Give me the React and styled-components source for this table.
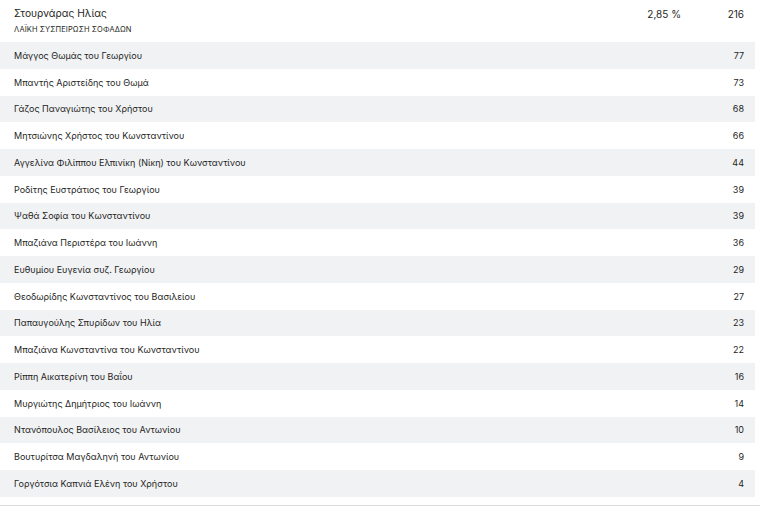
import React from 'react';
import styled, { createGlobalStyle } from 'styled-components';

const GlobalStyle = createGlobalStyle`
  body {
    margin: 0;
    background: #fff;
    font-family: Inter, "Noto Sans", sans-serif;
    color: #1f1f24;
  }
`;

const candidates = [
  ['Μάγγος Θωμάς του Γεωργίου', 77],
  ['Μπαντής Αριστείδης του Θωμά', 73],
  ['Γάζος Παναγιώτης του Χρήστου', 68],
  ['Μητσιώνης Χρήστος του Κωνσταντίνου', 66],
  ['Αγγελίνα Φιλίππου Ελπινίκη (Νίκη) του Κωνσταντίνου', 44],
  ['Ροδίτης Ευστράτιος του Γεωργίου', 39],
  ['Ψαθά Σοφία του Κωνσταντίνου', 39],
  ['Μπαζιάνα Περιστέρα του Ιωάννη', 36],
  ['Ευθυμίου Ευγενία συζ. Γεωργίου', 29],
  ['Θεοδωρίδης Κωνσταντίνος του Βασιλείου', 27],
  ['Παπαυγούλης Σπυρίδων του Ηλία', 23],
  ['Μπαζιάνα Κωνσταντίνα του Κωνσταντίνου', 22],
  ['Ρίππη Αικατερίνη του Βαΐου', 16],
  ['Μυργιώτης Δημήτριος του Ιωάννη', 14],
  ['Ντανόπουλος Βασίλειος του Αντωνίου', 10],
  ['Βουτυρίτσα Μαγδαληνή του Αντωνίου', 9],
  ['Γοργότσια Καπνιά Ελένη του Χρήστου', 4],
];

const Wrapper = styled.div`
  width: 760px;
  border-bottom: 1px solid #dcdde1;
  padding-bottom: 8px;
`;

const Table = styled.div`
  width: 755px;
  display: flex;
  flex-direction: column;
`;

const Header = styled.div`
  height: 42px;
  display: grid;
  grid-template-columns: 1fr 80px 63px;
  align-items: start;
  padding: 6px 11px 0 14px;
  box-sizing: border-box;
`;

const Party = styled.div`
  display: flex;
  flex-direction: column;
  gap: 4px;
`;

const Name = styled.span`
  font-size: 10.2px;
  line-height: 15px;
`;

const Subtitle = styled.span`
  font-size: 7.5px;
  letter-spacing: 0.1px;
  line-height: 10px;
`;

const HeadValue = styled.span`
  font-size: 10px;
  line-height: 15px;
  text-align: right;
  padding-top: 1px;
`;

const Row = styled.div`
  height: 26.75px;
  display: flex;
  align-items: center;
  justify-content: space-between;
  padding: 0 11px 0 14px;
  box-sizing: border-box;
  background: ${({ $shaded }) => ($shaded ? '#f1f2f4' : '#fff')};
  font-size: 9px;
`;

const Votes = styled.span`
  text-align: right;
`;

export default function App() {
  return (
    <>
      <GlobalStyle />
      <Wrapper>
        <Table>
          <Header>
            <Party>
              <Name>Στουρνάρας Ηλίας</Name>
              <Subtitle>ΛΑΪΚΗ ΣΥΣΠΕΙΡΩΣΗ ΣΟΦΑΔΩΝ</Subtitle>
            </Party>
            <HeadValue>2,85 %</HeadValue>
            <HeadValue>216</HeadValue>
          </Header>
          {candidates.map(([name, votes], i) => (
            <Row key={name} $shaded={i % 2 === 0}>
              <span>{name}</span>
              <Votes>{votes}</Votes>
            </Row>
          ))}
        </Table>
      </Wrapper>
    </>
  );
}
